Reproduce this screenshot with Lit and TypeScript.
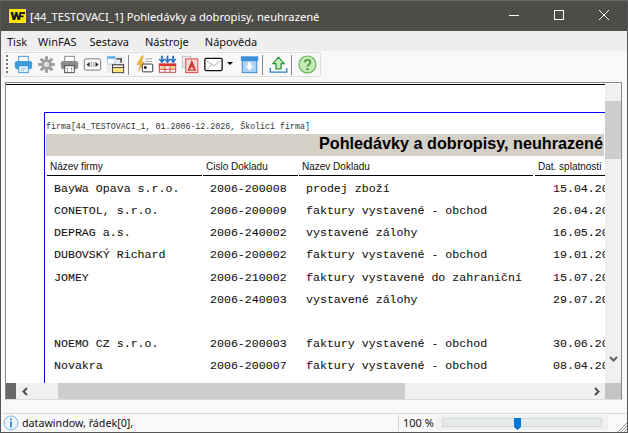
import { LitElement, html, css, svg } from "lit";
import { customElement } from "lit/decorators.js";

const rows = [
  ["BayWa Opava s.r.o.", "2006-200008", "prodej zboží", "15.04.2026"],
  ["CONETOL, s.r.o.", "2006-200009", "faktury vystavené - obchod", "26.04.2026"],
  ["DEPRAG a.s.", "2006-240002", "vystavené zálohy", "16.05.2026"],
  ["DUBOVSKÝ Richard", "2006-200002", "faktury vystavené - obchod", "19.01.2026"],
  ["JOMEY", "2006-210002", "faktury vystavené do zahraniční", "15.07.2026"],
  ["", "2006-240003", "vystavené zálohy", "29.07.2026"],
  ["", "", "", ""],
  ["NOEMO CZ s.r.o.", "2006-200003", "faktury vystavené - obchod", "30.06.2026"],
  ["Novakra", "2006-200007", "faktury vystavené - obchod", "08.04.2026"],
];

const ic = (body: unknown) =>
  html`<svg class="ic" width="19" height="19" viewBox="0 0 22 22" fill="none">${body}</svg>`;

const icons = [
  ic(svg`<rect x="5.5" y="1.5" width="11" height="6" fill="#fff" stroke="#2f86cc"/>
    <rect x="1" y="7" width="20" height="9.5" rx="2.5" fill="#3d9be0"/>
    <rect x="5.5" y="12.5" width="11" height="8" fill="#eaf5fd" stroke="#2f86cc"/>
    <path d="M8 15.5h6M8 17.8h4" stroke="#7db9e6"/>`),
  ic(svg`<path d="M11 5a6 6 0 1 0 0 12 6 6 0 0 0 0-12Zm0 3a3 3 0 1 1 0 6 3 3 0 0 1 0-6Z" fill="#9b9b9b"/>
    <circle cx="11" cy="11" r="3" fill="#dcdcdc"/>
    <path d="M11 1.5v4M11 16.5v4M1.5 11h4M16.5 11h4M4.3 4.3l2.8 2.8M14.9 14.9l2.8 2.8M17.7 4.3l-2.8 2.8M7.1 14.9l-2.8 2.8" stroke="#9b9b9b" stroke-width="3.4"/>`),
  ic(svg`<rect x="5.5" y="1.5" width="11" height="6" fill="#fff" stroke="#777"/>
    <rect x="1" y="7" width="20" height="9.5" rx="2.5" fill="#8b8b8b"/>
    <rect x="5.5" y="12.5" width="11" height="8" fill="#fff" stroke="#333"/>
    <path d="M8.5 15v1.5M13.5 15v1.5M8.5 18v1M13.5 18v1" stroke="#222"/>`),
  ic(svg`<rect x="1.5" y="4.5" width="19" height="13" rx="2" fill="#fff" stroke="#666"/>
    <path d="M4 11l3.5-3v6zM18 11l-3.5-3v6z" fill="#222"/><path d="M9.5 8v6M12.5 8v6" stroke="#777"/>`),
  ic(svg`<rect x="1" y="1" width="20" height="20" fill="#ececec"/>
    <rect x="1.5" y="1.5" width="9" height="9" fill="#fff" stroke="#9cc6e8"/>
    <rect x="1.5" y="1.5" width="9" height="3" fill="#6fb0e8"/>
    <rect x="7.5" y="11.5" width="13" height="9" fill="#ffe27a" stroke="#333"/>
    <rect x="7.5" y="11.5" width="13" height="3" fill="#fff" stroke="#333"/>
    <path d="M12 4.5h5.5V9" stroke="#333" stroke-width="1.6"/>`),
  null,
  ic(svg`<path d="M8 1 2 11h4L4 19l7-11H7.5L10 1z" fill="#f2b63c" stroke="#dd9c2c" stroke-width=".5"/>
    <rect x="8.5" y="10.5" width="12" height="9" rx="1" fill="#fff" stroke="#222"/>
    <rect x="10.5" y="13" width="3" height="3" fill="#222"/>
    <path d="M12 4.5h8M12 7.5h8" stroke="#999"/>`),
  ic(svg`<path d="M4.5 1v7M11 1v7M17.5 1v7" stroke="#1f6fc4" stroke-width="2"/>
    <path d="M1.5 4.5l3 4 3-4M8 4.5l3 4 3-4M14.5 4.5l3 4 3-4" stroke="#1f6fc4" stroke-width="1.6"/>
    <rect x="1.5" y="10.5" width="19" height="9.5" fill="#fff" stroke="#c8312c"/>
    <rect x="1" y="10" width="20" height="3" fill="#d9352f"/>
    <path d="M1.5 16.5h19M8 13v7M14 13v7" stroke="#c8312c"/>
    <rect x="3" y="14" width="4" height="1.8" fill="#f2c94c"/><rect x="15" y="14" width="4" height="1.8" fill="#f2c94c"/>`),
  ic(svg`<rect x="1.5" y="1.5" width="10" height="13" fill="#eee" stroke="#bbb"/>
    <rect x="5.5" y="4.5" width="14" height="16" fill="#f8d9d7" stroke="#d8302c"/>
    <path d="M12.5 7.5 8.5 17.5h8zM12.5 7.5v5M10 15.5l2.5-3 2.5 3" stroke="#d8302c" stroke-width="1.5"/>`),
  ic(svg`<rect x="1" y="4" width="20" height="14" rx="1.5" fill="#fff" stroke="#111" stroke-width="1.5"/>
    <path d="M2.5 6.5l9 6 8-6M3.5 16.5l6-5.5" stroke="#aaa"/>`),
  "caret",
  ic(svg`<rect x="2.5" y="6.5" width="17" height="14" fill="#a8d2f5" stroke="#2f7fc4"/>
    <rect x="1" y="1.5" width="20" height="5.5" fill="#3d8fd6"/>
    <path d="M9 8.5h4v4h3l-5 5.5-5-5.5h3z" fill="#fff"/>`),
  null,
  ic(svg`<path d="M11 2.5l6.5 7.5h-3.5v6h-6v-6H4.5z" fill="#c9ecc0" stroke="#2e9a3a" stroke-width="1.5"/>
    <path d="M1.5 15v4.8h19V15" stroke="#2f7fc4" stroke-width="1.5"/>`),
  null,
  ic(svg`<circle cx="11" cy="11" r="9.8" fill="#c5ebb9" stroke="#62b04f" stroke-width="1.3"/>
    <path d="M7.8 8.6C8 6.6 9.3 5.7 11 5.7c1.9 0 3.3 1.1 3.3 2.8 0 2.6-3.3 2.4-3.3 5.1" stroke="#4f9d3f" stroke-width="2.2"/>
    <circle cx="11" cy="16.4" r="1.4" fill="#4f9d3f"/>`),
];

@customElement("app-root")
export class AppRoot extends LitElement {
  static styles = css`
    :host { display: block; width: 628px; height: 433px; overflow: hidden; font-family: "Noto Sans", "Open Sans", sans-serif; }
    .win { width: 628px; height: 433px; box-sizing: border-box; border: 1px solid #555; border-top-color: #6a6a6a; background: #f8f8f8; display: flex; flex-direction: column; position: relative; }
    .title { height: 30px; background: #4e4c48; color: #fff; display: flex; align-items: center; font-size: 11.2px; flex: none; }
    .logo { width: 17px; height: 14px; margin: 0 4px 0 8px; background: #ffe600; flex: none; }
    .logo svg { display: block; }
    .ttext { flex: 1; white-space: nowrap; }
    .wb { width: 45px; height: 28px; align-self: flex-start; display: flex; align-items: center; justify-content: center; flex: none; }
    .wb:last-child { width: 46px; }
    .wb svg { display: block; }
    .menu { height: 20px; background: #eeeeee; display: flex; align-items: center; font-size: 11px; color: #111; flex: none; }
    .menu span:nth-child(1) { margin-left: 6px; }
    .menu span:nth-child(2) { margin-left: 11px; }
    .menu span:nth-child(3) { margin-left: 13px; }
    .menu span:nth-child(4), .menu span:nth-child(5) { margin-left: 16px; }
    .tbarea { height: 31px; background: #f8f8f8; flex: none; padding: 1px 0 0 1px; box-sizing: border-box; }
    .tb { height: 25px; width: 319px; box-sizing: border-box; border: 1px solid #dcdcdc; border-radius: 3px; display: flex; align-items: center; padding-left: 3px; }
    .grip { width: 2px; height: 19px; margin-right: 6px; flex: none; background-image: linear-gradient(#777 50%, transparent 50%); background-size: 2px 4px; }
    .ic { display: block; flex: none; margin-right: 4px; }
    .sep { width: 1px; height: 20px; background: #888; margin: 0 6px 0 -1px; flex: none; }
    .caret { width: 0; height: 0; border-style: solid; border-color: #000 transparent transparent; border-width: 3px 3px 0; margin: 0 7px 3px 0; flex: none; }
    .frame { flex: none; height: 318px; margin: 0 5px 0 4px; border: 1px solid #888; border-bottom-color: #dcdcdc; padding-top: 1px; background: #fff; display: grid; grid-template-columns: 599px 16px; grid-template-rows: 299px 16px; box-sizing: border-box; }
    .view { overflow: hidden; border-top: 1px solid #000; background: #fff; }
    .page { margin: 27px 0 0 38px; width: 800px; height: 400px; border: 0 solid #0000ff; border-width: 1px 0 0 1px; box-sizing: border-box; }
    .firm { font: 8.3px/10px "Liberation Mono", monospace; color: #333; margin: 9px 0 0 1px; white-space: nowrap; height: 10px; }
    .band { margin: 2px 0 0 1px; width: 558px; height: 22px; box-sizing: border-box; background: #d4d0c8; text-align: right; font: 700 16.2px/19px "Liberation Sans", sans-serif; color: #000; white-space: nowrap; padding-right: 1px; }
    .hd { display: grid; grid-template-columns: 155px 95px 234px 100px; gap: 1px; margin: 5px 0 0 2px; font: 10px/11px "Liberation Sans", sans-serif; color: #111; }
    .hd div { border-bottom: 1px solid #000; height: 14px; padding-left: 3px; white-space: nowrap; }
    .hd div:last-child { margin-left: 1px; }
    .rows { margin-top: 2px; }
    .row { display: grid; grid-template-columns: 156px 96px 247px 80px; height: 22.125px; font: 11.62px/22px "Liberation Mono", monospace; color: #111; -webkit-text-stroke: .08px #111; margin-left: 9px; white-space: pre; }
    .vs { background: #f0f0f0; display: flex; flex-direction: column; align-items: center; }
    .vthumb { width: 16px; height: 58px; margin-top: 17px; background: #cdcdcd; flex: none; }
    .sp { flex: 1; }
    .hs { background: #f0f0f0; display: flex; align-items: stretch; }
    .hend { width: 10px; background: #696969; flex: none; }
    .arrow { width: 17px; height: 16px; display: flex; align-items: center; justify-content: center; flex: none; }
    .hgap { width: 25px; flex: none; }
    .hthumb { width: 347px; background: #cdcdcd; flex: none; }
    .corner { background: #c4c4c4; }
    .spacer { flex: none; height: 13px; }
    .status { flex: 1; margin: 0 1px 0 2px; border-top: 1px solid #d9d9d9; display: flex; align-items: center; font-size: 10.7px; color: #111; }
    .info { margin-right: 3px; flex: none; }
    .stext { width: 376px; white-space: nowrap; flex: none; }
    .zoom { border-left: 1px solid #d0d0d0; height: 16px; box-sizing: border-box; width: 38px; padding-left: 4px; line-height: 15px; font-size: 11px; flex: none; }
    .slider { width: 172px; height: 15px; background: #f0f0f0; position: relative; flex: none; align-self: flex-start; margin-top: 1px; }
    .track { position: absolute; left: 6px; right: 6px; top: 3px; height: 9px; box-sizing: border-box; background: #e6e9ea; border: 1px solid #d4d8d8; }
    .knob { position: absolute; left: 78px; top: 3px; width: 7px; height: 12px; background: #0078d7; clip-path: polygon(0 0,100% 0,100% 75%,50% 100%,0 75%); }
    .sizegrip { position: absolute; right: 0; bottom: 0; display: block; }
  `;

  render() {
    return html`<div class="win">
      <div class="title">
        <div class="logo"><svg width="17" height="14" viewBox="0 0 17 14"><path d="M1.5 3h2.6l.9 4.4L6.4 3h2l1.3 4.4L10.6 3h5.4v2h-3.8l-.3 1.4h3l-.4 1.8h-3L11 11H8.6L7.4 7l-1.2 4H3.7z" fill="#1c1c1c"/></svg></div>
        <div class="ttext">[44_TESTOVACI_1] Pohledávky a dobropisy, neuhrazené</div>
        <div class="wb"><svg width="10" height="10"><path d="M0 5.5h10" stroke="#fff"/></svg></div>
        <div class="wb"><svg width="10" height="10"><rect x=".5" y=".5" width="9" height="9" fill="none" stroke="#fff"/></svg></div>
        <div class="wb"><svg width="10" height="10"><path d="M0 0l10 10M10 0 0 10" stroke="#fff"/></svg></div>
      </div>
      <div class="menu"><span>Tisk</span><span>WinFAS</span><span>Sestava</span><span>Nástroje</span><span>Nápověda</span></div>
      <div class="tbarea"><div class="tb"><div class="grip"></div>
        ${icons.map((i) => (i === null ? html`<div class="sep"></div>` : i === "caret" ? html`<div class="caret"></div>` : i))}
      </div></div>
      <div class="frame">
        <div class="view"><div class="page">
          <div class="firm">firma[44_TESTOVACI_1, 01.2006-12.2026, Školicí firma]</div>
          <div class="band">Pohledávky a dobropisy, neuhrazené</div>
          <div class="hd"><div>Název firmy</div><div>Cislo Dokladu</div><div>Nazev Dokladu</div><div>Dat. splatnosti</div></div>
          <div class="rows">${rows.map((r) => html`<div class="row"><div>${r[0]}</div><div>${r[1]}</div><div>${r[2]}</div><div>${r[3]}</div></div>`)}</div>
        </div></div>
        <div class="vs"><div class="vthumb"></div><div class="sp"></div>
          <div class="arrow"><svg width="9" height="6"><path d="M1 1l3.5 3.5L8 1" fill="none" stroke="#606060" stroke-width="2"/></svg></div><div class="arrow"></div></div>
        <div class="hs"><div class="hend"></div>
          <div class="arrow"><svg width="6" height="9"><path d="M5 1 1.5 4.5 5 8" fill="none" stroke="#505050" stroke-width="2"/></svg></div>
          <div class="hgap"></div><div class="hthumb"></div><div class="sp"></div>
          <div class="arrow"><svg width="6" height="9"><path d="M1 1l3.5 3.5L1 8" fill="none" stroke="#505050" stroke-width="2"/></svg></div></div>
        <div class="corner"></div>
      </div>
      <div class="spacer"></div>
      <div class="status">
        <svg class="info" width="16" height="16" viewBox="0 0 16 16"><circle cx="8" cy="8" r="7" fill="#eaf4fd" stroke="#7ab8ec"/><path d="M8 3.5v1.8M8 6.5v6" stroke="#2a7fd0" stroke-width="1.7"/></svg>
        <div class="stext">datawindow, řádek[0],</div>
        <div class="zoom">100 %</div>
        <div class="slider"><div class="track"></div><div class="knob"></div></div>
      </div>
      <svg class="sizegrip" width="9" height="9"><path d="M0 9l9-9M3 9l6-6M6 9l3-3" stroke="#999"/></svg>
    </div>`;
  }
}
